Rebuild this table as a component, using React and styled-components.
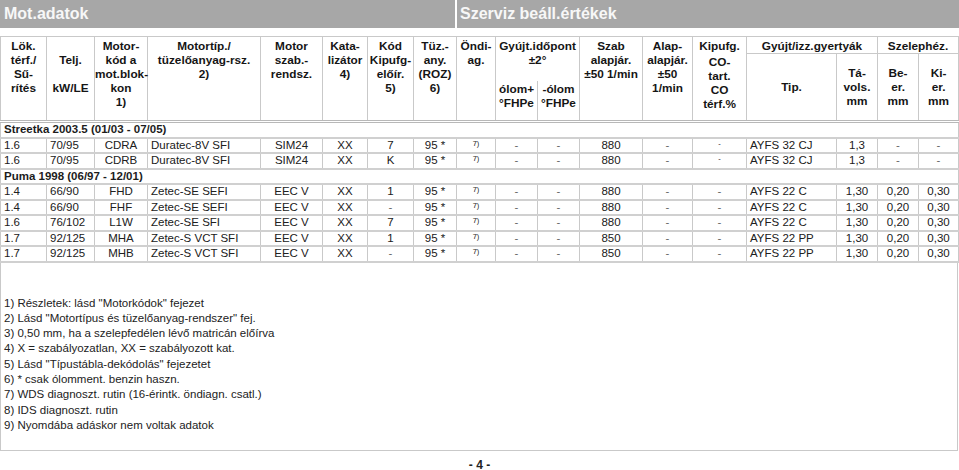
import React from "react";
import styled, { createGlobalStyle } from "styled-components";

const lineGrey = "#c9c9c9";
const rowGrey = "#d0d0d0";

const GlobalStyle = createGlobalStyle`
  html, body {
    margin: 0;
    background: #ffffff;
  }
  body {
    font-family: "Liberation Sans", Arial, Helvetica, sans-serif;
    color: #1c1c1c;
  }
`

const Page = styled.div`
  width: 959px;
  height: 470px;
  display: flex;
  flex-direction: column;
  overflow: hidden;
`
const TitleRow = styled.div`
  display: flex;
  gap: 2px;
  height: 28px;
  margin-bottom: 8px;
`
const TitleBar = styled.div`
  box-sizing: border-box;
  width: ${props => props.$width ? `${props.$width}px` : "auto"};
  flex: ${props => props.$width ? "none" : 1};
  padding-left: ${props => props.$pad}px;
  background: #a7a7a7;
  color: #f7f7f7;
  font-size: 16px;
  font-weight: bold;
  line-height: 28px;
`
const Table = styled.table`
  width: 958px;
  border-collapse: collapse;
  table-layout: fixed;
  font-size: 11.5px;
`
const HeadRow = styled.tr`
  height: ${props => props.$h}px;
`
const HeadCell = styled.th`
  font-size: 11.8px;
  font-weight: bold;
  line-height: 14px;
  text-align: center;
  vertical-align: ${props => props.$middle ? "middle" : "top"};
  padding: ${props => props.$pad ?? 2}px 0 0;
  border: 1px solid ${lineGrey};
  border-bottom: ${props => props.$last ? "3px double #b8b8b8" : props.$openBottom ? "none" : `1px solid ${lineGrey}`};
  border-top: ${props => props.$openTop ? "none" : `1px solid ${lineGrey}`};
  color: #151515;
  white-space: nowrap;
`
const Gap = styled.div`
  height: ${props => props.$h}px;
`
const SectionCell = styled.td`
  height: 13.5px;
  padding: 0 0 0 3px;
  font-weight: bold;
  line-height: 13.5px;
  border-bottom: 2px solid ${rowGrey};
  border-left: 1px solid ${lineGrey};
  border-right: 1px solid ${lineGrey};
`
const Cell = styled.td`
  height: 13.5px;
  padding: ${props => props.$align === "left" ? "0 0 0 3px" : "0"};
  line-height: 13.5px;
  text-align: ${props => props.$align};
  vertical-align: ${props => props.$sup ? "top" : "middle"};
  border-left: 1px solid ${lineGrey};
  border-right: 1px solid ${lineGrey};
  border-bottom: 2px solid ${rowGrey};
  white-space: nowrap;
  color: #202020;
`
const Sup = styled.span`
  display: block;
  font-size: 7.5px;
  line-height: 10px;
`
const Dash = styled.span`
  color: #666;
`
const Notes = styled.div`
  box-sizing: border-box;
  width: 958px;
  flex: none;
  height: 188px;
  padding: 33px 0 0 3px;
  border: 1px solid ${lineGrey};
  border-top: none;
  font-size: 11.5px;
  line-height: 15.3px;
  color: #222;
`
const PageNo = styled.div`
  margin-top: 8px;
  text-align: center;
  font-size: 12px;
  line-height: 12px;
  font-weight: bold;
  color: #222;
`

const colWidths = [46, 48, 53, 113, 62, 45, 46, 43, 39, 42, 42, 63, 50, 54, 90, 41, 41, 40];
const aligns = ["left", "left", "center", "left", "center", "center", "center", "center", "center",
    "center", "center", "center", "center", "center", "left", "center", "center", "center"];

const sections = [
    {
        title: "Streetka 2003.5 (01/03 - 07/05)",
        rows: [
            ["1.6", "70/95", "CDRA", "Duratec-8V SFI", "SIM24", "XX", "7", "95 *", "7)", "-", "-", "880", "-", "^", "AYFS 32 CJ", "1,3", "-", "-"],
            ["1.6", "70/95", "CDRB", "Duratec-8V SFI", "SIM24", "XX", "K", "95 *", "7)", "-", "-", "880", "-", "^", "AYFS 32 CJ", "1,3", "-", "-"],
        ]
    },
    {
        title: "Puma 1998 (06/97 - 12/01)",
        rows: [
            ["1.4", "66/90", "FHD", "Zetec-SE SEFI", "EEC V", "XX", "1", "95 *", "7)", "-", "-", "880", "-", "-", "AYFS 22 C", "1,30", "0,20", "0,30"],
            ["1.4", "66/90", "FHF", "Zetec-SE SEFI", "EEC V", "XX", "-", "95 *", "7)", "-", "-", "880", "-", "-", "AYFS 22 C", "1,30", "0,20", "0,30"],
            ["1.6", "76/102", "L1W", "Zetec-SE SFI", "EEC V", "XX", "7", "95 *", "7)", "-", "-", "880", "-", "-", "AYFS 22 C", "1,30", "0,20", "0,30"],
            ["1.7", "92/125", "MHA", "Zetec-S VCT SFI", "EEC V", "XX", "1", "95 *", "7)", "-", "-", "850", "-", "-", "AYFS 22 PP", "1,30", "0,20", "0,30"],
            ["1.7", "92/125", "MHB", "Zetec-S VCT SFI", "EEC V", "XX", "-", "95 *", "7)", "-", "-", "850", "-", "-", "AYFS 22 PP", "1,30", "0,20", "0,30"],
        ]
    }
];

const notes = [
    "1) Részletek: lásd \"Motorkódok\" fejezet",
    "2) Lásd \"Motortípus és tüzelőanyag-rendszer\" fej.",
    "3) 0,50 mm, ha a szelepfedélen lévő matricán előírva",
    "4) X = szabályozatlan, XX = szabályozott kat.",
    "5) Lásd \"Típustábla-dekódolás\" fejezetet",
    "6) * csak ólomment. benzin haszn.",
    "7) WDS diagnoszt. rutin (16-érintk. öndiagn. csatl.)",
    "8) IDS diagnoszt. rutin",
    "9) Nyomdába adáskor nem voltak adatok",
];

const Lines = ({ items }) => items.map((t, i) => <div key={i}>{t}</div>);

const renderValue = (value, i) => {
    if (i === 8) return <Sup>{value}</Sup>;
    if (value === "^") return <Sup>-</Sup>;
    if (value === "-") return <Dash>-</Dash>;
    return value;
};

const App = () => (
    <Page>
        <GlobalStyle/>
        <TitleRow>
            <TitleBar $width={455} $pad={4}>Mot.adatok</TitleBar>
            <TitleBar $pad={3}>Szerviz beáll.értékek</TitleBar>
        </TitleRow>
        <Table>
            <colgroup>
                {colWidths.map((w, i) => <col key={i} style={{ width: w }}/>)}
            </colgroup>
            <thead>
                <HeadRow $h={17}>
                    <HeadCell rowSpan={3} $last><Lines items={["Lök.", "térf./", "Sű-", "rítés"]}/></HeadCell>
                    <HeadCell rowSpan={3} $last>
                        <Gap $h={14}/>
                        <div>Telj.</div>
                        <Gap $h={14}/>
                        <div>kW/LE</div>
                    </HeadCell>
                    <HeadCell rowSpan={3} $last><Lines items={["Motor-", "kód a", "mot.blok-", "kon", "1)"]}/></HeadCell>
                    <HeadCell rowSpan={3} $last><Lines items={["Motortíp./", "tüzelőanyag-rsz.", "2)"]}/></HeadCell>
                    <HeadCell rowSpan={3} $last><Lines items={["Motor", "szab.-", "rendsz."]}/></HeadCell>
                    <HeadCell rowSpan={3} $last><Lines items={["Kata-", "lizátor", "4)"]}/></HeadCell>
                    <HeadCell rowSpan={3} $last><Lines items={["Kód", "Kipufg-", "előír.", "5)"]}/></HeadCell>
                    <HeadCell rowSpan={3} $last><Lines items={["Tüz.-", "any.", "(ROZ)", "6)"]}/></HeadCell>
                    <HeadCell rowSpan={3} $last><Lines items={["Öndi-", "ag."]}/></HeadCell>
                    <HeadCell rowSpan={2} colSpan={2} $openBottom><Lines items={["Gyújt.időpont", "±2°"]}/></HeadCell>
                    <HeadCell rowSpan={3} $last><Lines items={["Szab", "alapjár.", "±50 1/min"]}/></HeadCell>
                    <HeadCell rowSpan={3} $last><Lines items={["Alap-", "alapjár.", "±50", "1/min"]}/></HeadCell>
                    <HeadCell rowSpan={3} $last>
                        <div>Kipufg.</div>
                        <Gap $h={2}/>
                        <Lines items={["CO-", "tart.", "CO", "térf.%"]}/>
                    </HeadCell>
                    <HeadCell colSpan={2}>Gyújt/izz.gyertyák</HeadCell>
                    <HeadCell colSpan={2}>Szelephéz.</HeadCell>
                </HeadRow>
                <HeadRow $h={27}>
                    <HeadCell rowSpan={2} $last $middle $pad={0}>Tip.</HeadCell>
                    <HeadCell rowSpan={2} $last $middle $pad={0}><Lines items={["Tá-", "vols.", "mm"]}/></HeadCell>
                    <HeadCell rowSpan={2} $last $middle $pad={0}><Lines items={["Be-", "er.", "mm"]}/></HeadCell>
                    <HeadCell rowSpan={2} $last $middle $pad={0}><Lines items={["Ki-", "er.", "mm"]}/></HeadCell>
                </HeadRow>
                <HeadRow $h={41}>
                    <HeadCell $last $openTop $pad={1}><Lines items={["ólom+", "°FHPe"]}/></HeadCell>
                    <HeadCell $last $openTop $pad={1}><Lines items={["-ólom", "°FHPe"]}/></HeadCell>
                </HeadRow>
            </thead>
            <tbody>
                {sections.map(section => (
                    <React.Fragment key={section.title}>
                        <tr>
                            <SectionCell colSpan={18}>{section.title}</SectionCell>
                        </tr>
                        {section.rows.map((row, r) => (
                            <tr key={r}>
                                {row.map((value, i) => (
                                    <Cell key={i} $align={aligns[i]} $sup={i === 8 || value === "^"}>
                                        {renderValue(value, i)}
                                    </Cell>
                                ))}
                            </tr>
                        ))}
                    </React.Fragment>
                ))}
            </tbody>
        </Table>
        <Notes>
            {notes.map(n => <div key={n}>{n}</div>)}
        </Notes>
        <PageNo>- 4 -</PageNo>
    </Page>
)

export default App
